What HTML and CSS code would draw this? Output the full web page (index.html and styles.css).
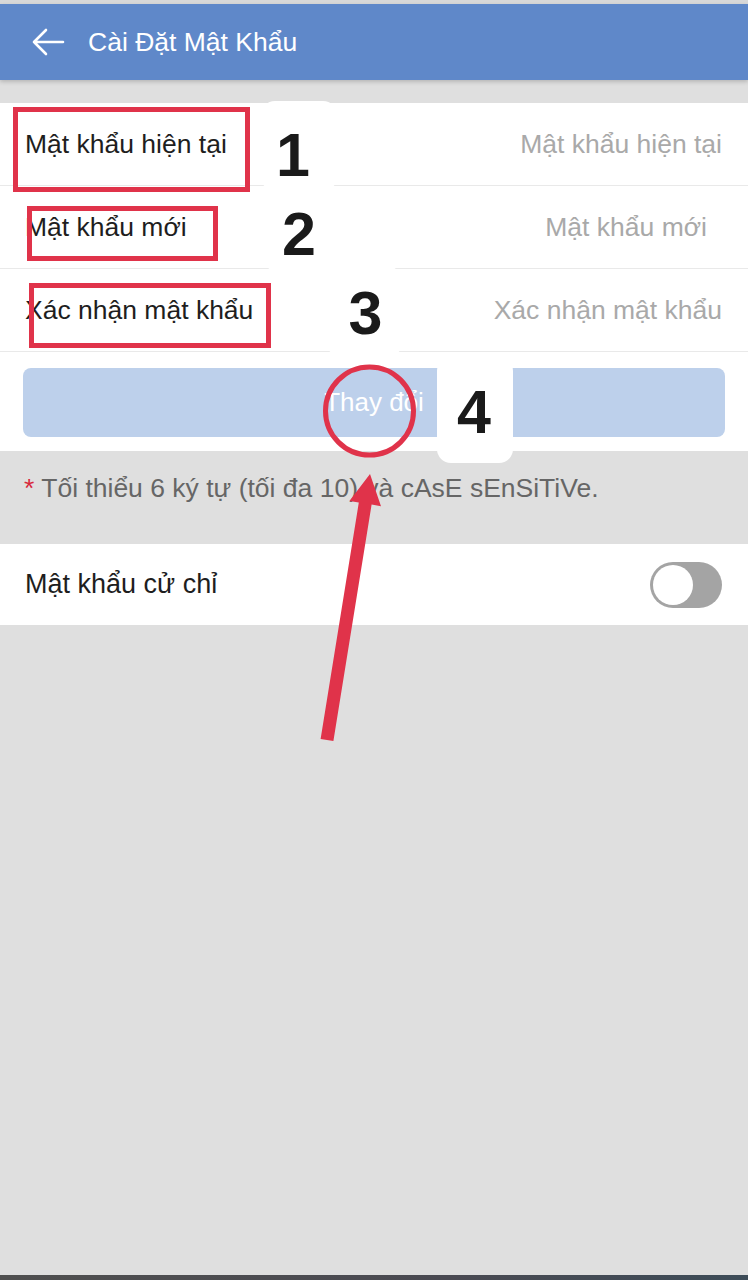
FILE: index.html
```html
<!DOCTYPE html>
<html lang="vi">
<head>
<meta charset="utf-8">
<title>Cài Đặt Mật Khẩu</title>
<link rel="stylesheet" href="styles.css">
</head>
<body>
<div class="page">
  <div class="status-strip"></div>
  <header class="appbar">
    <svg class="back" width="34" height="30" viewBox="0 0 34 30" aria-hidden="true">
      <path d="M32 15 H3 M15 3 L3 15 L15 27" fill="none" stroke="#fff" stroke-width="2.6" stroke-linecap="round" stroke-linejoin="round"/>
    </svg>
    <h1 class="title">Cài Đặt Mật Khẩu</h1>
  </header>

  <section class="card">
    <div class="row">
      <span class="label">Mật khẩu hiện tại</span>
      <span class="placeholder">Mật khẩu hiện tại</span>
    </div>
    <div class="row">
      <span class="label">Mật khẩu mới</span>
      <span class="placeholder ph-inset">Mật khẩu mới</span>
    </div>
    <div class="row">
      <span class="label">Xác nhận mật khẩu</span>
      <span class="placeholder">Xác nhận mật khẩu</span>
    </div>
    <div class="btn-wrap">
      <div class="btn">Thay đổi</div>
    </div>
  </section>

  <p class="note"><span class="star">*</span> Tối thiểu 6 ký tự (tối đa 10) và cAsE sEnSiTiVe.</p>

  <section class="card gesture">
    <span class="label">Mật khẩu cử chỉ</span>
    <span class="toggle"><span class="knob"></span></span>
  </section>

  <div class="spacer"></div>
  <div class="bottom-bar"></div>

  <div class="annot">
    <div class="patch p1"><span class="num">1</span></div>
    <div class="patch p2"><span class="num">2</span></div>
    <div class="patch p3"><span class="num">3</span></div>
    <div class="patch p4"><span class="num">4</span></div>
    <svg class="marks" width="748" height="1280" viewBox="0 0 748 1280" aria-hidden="true">
      <g fill="none" stroke="#e0334a" stroke-width="5">
        <rect x="15.5" y="109.5" width="232" height="80"/>
        <rect x="29.5" y="208.5" width="186" height="50"/>
        <rect x="31.5" y="285.5" width="237" height="60"/>
        <ellipse cx="369.5" cy="411" rx="44" ry="44"/>
      </g>
      <polygon fill="#e0334a" points="320.6,739 333.4,741 371.6,504.6 381,506.2 370,474 349.4,501 358.8,502.6"/>
    </svg>
  </div>
</div>
</body>
</html>
```

FILE: styles.css
```css
* { box-sizing: border-box; }
html, body {
  margin: 0;
  padding: 0;
}
body {
  background: #dfdfdf;
  font-family: "Liberation Sans", Arial, "Noto Sans", sans-serif;
  color: #222;
}
.page {
  position: relative;
  width: 748px;
  height: 1280px;
  display: flex;
  flex-direction: column;
  overflow: hidden;
}
.status-strip {
  height: 4px;
  background: #d8d8d8;
  flex: none;
}
.appbar {
  flex: none;
  height: 76px;
  background: #5f88c9;
  display: flex;
  align-items: center;
  padding-left: 31px;
  box-shadow: 0 2px 4px rgba(0,0,0,0.18);
  position: relative;
  z-index: 1;
}
.back { display: block; }
.title {
  margin: 0 0 0 23px;
  font-size: 26.5px;
  font-weight: normal;
  color: #fff;
}
.card {
  background: #fff;
  flex: none;
}
.appbar + .card { margin-top: 23px; }
.row {
  height: 83px;
  border-bottom: 1px solid #e9e9e9;
  display: flex;
  align-items: center;
  justify-content: space-between;
  padding: 0 26px 0 25px;
}
.label {
  font-size: 26.5px;
  color: #1e1e1e;
}
.placeholder {
  font-size: 26.5px;
  color: #a9a9a9;
}
.ph-inset { margin-right: 15px; }
.btn-wrap {
  padding: 16px 23px 14px;
}
.btn {
  height: 69px;
  border-radius: 8px;
  background: #bdd0eb;
  color: #fff;
  font-size: 26px;
  display: flex;
  align-items: center;
  justify-content: center;
}
.note {
  margin: 0;
  height: 93px;
  padding: 22px 24px 0;
  font-size: 26.5px;
  line-height: 30px;
  color: #666;
  flex: none;
}
.star { color: #d8283c; }
.gesture {
  height: 81px;
  display: flex;
  align-items: center;
  justify-content: space-between;
  padding: 0 26px 0 25px;
}
.gesture .label { font-size: 27px; }
.toggle {
  width: 72px;
  height: 46px;
  border-radius: 23px;
  background: #a4a4a4;
  padding: 3px;
  display: flex;
}
.knob {
  width: 40px;
  height: 40px;
  border-radius: 50%;
  background: #fff;
}
.spacer { flex: 1; }
.bottom-bar {
  flex: none;
  height: 5px;
  background: linear-gradient(90deg, #4f4f4f, #4a4a52 60%, #3d4c58);
}
.annot {
  position: absolute;
  left: 0;
  top: 0;
  width: 748px;
  height: 1280px;
  pointer-events: none;
  z-index: 2;
}
.patch {
  position: absolute;
  background: #fff;
  border-radius: 14px;
  display: flex;
  align-items: center;
  justify-content: center;
}
.p1 { left: 261px; top: 101px; width: 76px; height: 90px; }
.p2 { left: 264px; top: 186px; width: 136px; height: 86px; }
.p3 { left: 327px; top: 268px; width: 75px; height: 89px; }
.p4 { left: 437px; top: 357px; width: 76px; height: 106px; }
.num {
  font-family: "Liberation Sans", Arial, sans-serif;
  font-weight: bold;
  font-size: 61px;
  line-height: 1;
  color: #1a1a1a;
}
.p1 .num { margin-left: -12px; margin-top: 18px; }
.p2 .num { margin-left: -66px; margin-top: 10px; }
.p3 .num { margin-left: 2px; margin-top: 2px; }
.p4 .num { margin-left: -2px; margin-top: 4px; }
.marks {
  position: absolute;
  left: 0;
  top: 0;
}
```
